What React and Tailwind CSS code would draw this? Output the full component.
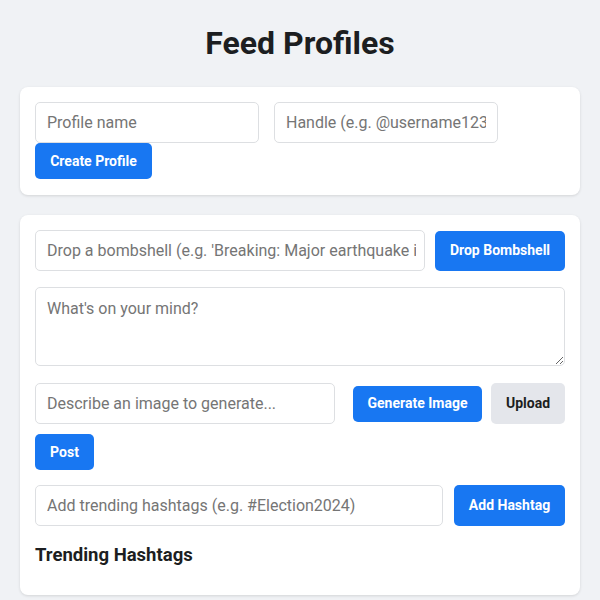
import { useState } from "react";

const inputCls =
  "h-[41px] rounded-[5px] border border-[#dddfe2] bg-white px-[11px] text-[16px] text-[#1c1e21] placeholder:text-[#757575] outline-none";
const blueBtn =
  "rounded-[5px] bg-[#1877f2] text-[14px] font-bold text-white flex items-center justify-center";

export default function App() {
  const [name, setName] = useState("");
  const [handle, setHandle] = useState("");
  const [bomb, setBomb] = useState("");
  const [post, setPost] = useState("");
  const [imgPrompt, setImgPrompt] = useState("");
  const [tag, setTag] = useState("");

  return (
    <div
      className="min-h-[600px] bg-[#f0f2f5] px-5 pb-8 text-[#1c1e21]"
      style={{ fontFamily: "Roboto, 'Liberation Sans', sans-serif" }}
    >
      <h1 className="pt-[24px] pb-[25px] text-center text-[32px] font-bold leading-[38px]">Feed Profiles</h1>

      {/* crear perfil */}
      <div className="rounded-lg bg-white px-[15px] pt-[15px] pb-[16px] shadow-[0_1px_3px_rgba(0,0,0,0.12)]">
        <div className="flex gap-[15px]">
          <input
            className={`${inputCls} w-[224px]`}
            placeholder="Profile name"
            value={name}
            onChange={(e) => setName(e.target.value)}
          />
          <input
            className={`${inputCls} w-[224px]`}
            placeholder="Handle (e.g. @username123)"
            value={handle}
            onChange={(e) => setHandle(e.target.value)}
          />
        </div>
        <button className={`${blueBtn} h-[36px] w-[117px]`}>Create Profile</button>
      </div>

      {/* feed */}
      <div className="mt-[20px] rounded-lg bg-white px-[15px] pt-[15px] pb-[28px] shadow-[0_1px_3px_rgba(0,0,0,0.12)]">
        <div className="flex items-center gap-[10px]">
          <input
            className={`${inputCls} flex-1 min-w-0 pr-[8px]`}
            placeholder="Drop a bombshell (e.g. 'Breaking: Major earthquake in...')"
            value={bomb}
            onChange={(e) => setBomb(e.target.value)}
          />
          <button className={`${blueBtn} h-[40px] w-[130px]`}>Drop Bombshell</button>
        </div>

        <textarea
          className="mt-[16px] block h-[79px] w-full rounded-[5px] border border-[#dddfe2] px-[11px] py-[9px] text-[16px] placeholder:text-[#757575] outline-none"
          placeholder="What's on your mind?"
          value={post}
          onChange={(e) => setPost(e.target.value)}
        />

        <div className="mt-[17px] flex items-center">
          <input
            className={`${inputCls} w-[300px]`}
            placeholder="Describe an image to generate..."
            value={imgPrompt}
            onChange={(e) => setImgPrompt(e.target.value)}
          />
          <button className={`${blueBtn} ml-[18px] h-[36px] w-[129px]`}>Generate Image</button>
          <button className="ml-[9px] flex h-[41px] w-[74px] items-center justify-center rounded-[5px] bg-[#e4e6eb] text-[14px] font-bold text-[#1c1e21]">
            Upload
          </button>
        </div>

        <button className={`${blueBtn} mt-[10px] h-[36px] w-[59px]`}>Post</button>

        <div className="mt-[15px] flex items-center gap-[11px]">
          <input
            className={`${inputCls} flex-1 min-w-0`}
            placeholder="Add trending hashtags (e.g. #Election2024)"
            value={tag}
            onChange={(e) => setTag(e.target.value)}
          />
          <button className={`${blueBtn} h-[41px] w-[111px]`}>Add Hashtag</button>
        </div>

        <h3 className="mt-[17px] text-[18.5px] font-bold leading-[24px]">Trending Hashtags</h3>
      </div>
    </div>
  );
}
